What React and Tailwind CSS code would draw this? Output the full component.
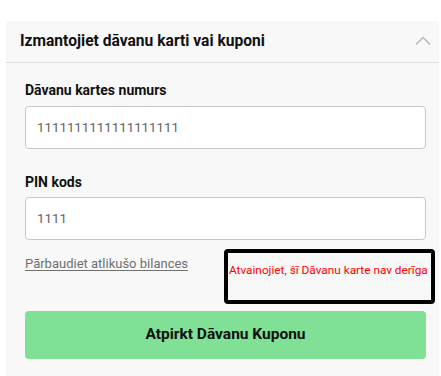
export default function App() {
  return (
    <div className="w-[441px] h-[376px] bg-white pt-[21px] pl-[6px] pr-[2px] overflow-hidden" style={{ fontFamily: 'Roboto, "Liberation Sans", sans-serif' }}>
      <div className="bg-[#f8f8f8] h-full">
        {/* accordion header */}
        <div className="h-[42px] flex items-center justify-between pl-[14px] pr-[8px] border-b border-[#dddddd]">
          <h2 className="text-[15.6px] font-bold text-[#111]">Izmantojiet dāvanu karti vai kuponi</h2>
          <svg width="16" height="10" viewBox="0 0 16 10" fill="none" className="mt-[-2px]">
            <polyline points="1,8.5 8,1.5 15,8.5" stroke="#b5b5b5" strokeWidth="1.4" />
          </svg>
        </div>

        <div className="pl-[19px] pr-[13px] pt-[17px]">
          <label className="block text-[14px] leading-[20px] font-bold text-[#111] mb-[6px]">Dāvanu kartes numurs</label>
          <div className="h-[43px] bg-white border border-[#c8c8c8] rounded-[4px] flex items-center pl-[11px] text-[13.3px] text-[#666]">
            1111111111111111111
          </div>

          <label className="block text-[14px] leading-[20px] font-bold text-[#111] mt-[23px] mb-[5px]">PIN kods</label>
          <div className="h-[43px] bg-white border border-[#c8c8c8] rounded-[4px] flex items-center pl-[11px] text-[13.3px] text-[#666]">
            1111
          </div>

          <div className="flex items-start justify-between mt-[9px] mr-[-9px]">
            <a className="mt-[6px] text-[13px] leading-[18px] text-[#707070] underline underline-offset-2">Pārbaudiet atlikušo bilances</a>
            <div className="w-[211px] h-[55px] border-[4px] border-black rounded-[4px] pt-[9px] pl-[1px]">
              <p className="text-[11.8px] leading-[16px] text-[#ff0000] whitespace-nowrap">Atvainojiet, šī Dāvanu karte nav derīga</p>
            </div>
          </div>

          <button className="mt-[7px] w-full h-[48px] bg-[#7fe096] rounded-[4px] text-[15.5px] font-bold text-[#111]">
            Atpirkt Dāvanu Kuponu
          </button>
        </div>
      </div>
    </div>
  );
}
